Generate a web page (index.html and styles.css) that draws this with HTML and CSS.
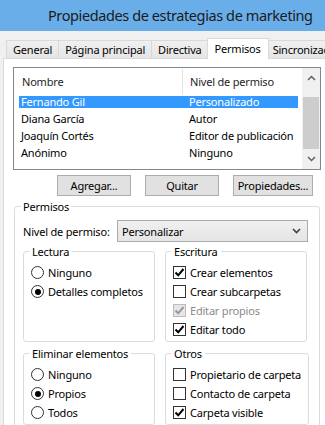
FILE: index.html
```html
<!DOCTYPE html>
<html lang="es">
<head>
  <meta charset="UTF-8" />
  <meta name="viewport" content="width=device-width, initial-scale=1" />
  <title>Propiedades de estrategias de marketing</title>
  <link rel="stylesheet" href="styles.css">
</head>
<body>
  <div class="window">
    <div class="titlebar">Propiedades de estrategias de marketing</div>

    <!-- Tab strip -->
    <div class="tabs">
      <div class="tab">General</div>
      <div class="tab">Página principal</div>
      <div class="tab">Directiva</div>
      <div class="tab active">Permisos</div>
      <div class="tab">Sincronización</div>
    </div>

    <div class="panel">
      <!-- Users list -->
      <div class="listbox">
        <div class="list-main">
          <div class="list-head">
            <div class="col-name">Nombre</div>
            <div class="col-level">Nivel de permiso</div>
          </div>
          <div class="row selected"><span class="col-name">Fernando Gil</span><span class="col-level">Personalizado</span></div>
          <div class="row"><span class="col-name">Diana García</span><span class="col-level">Autor</span></div>
          <div class="row"><span class="col-name">Joaquín Cortés</span><span class="col-level">Editor de publicación</span></div>
          <div class="row"><span class="col-name">Anónimo</span><span class="col-level">Ninguno</span></div>
        </div>
        <div class="scrollbar">
          <div class="scroll-btn">
            <svg width="9" height="6" viewBox="0 0 9 6"><path d="M1 5 L4.5 1.5 L8 5" fill="none" stroke="#606060" stroke-width="1.5"/></svg>
          </div>
          <div class="scroll-track"><div class="scroll-thumb"></div></div>
          <div class="scroll-btn">
            <svg width="9" height="6" viewBox="0 0 9 6"><path d="M1 1 L4.5 4.5 L8 1" fill="none" stroke="#606060" stroke-width="1.5"/></svg>
          </div>
        </div>
      </div>

      <div class="buttons">
        <button class="btn">Agregar...</button>
        <button class="btn">Quitar</button>
        <button class="btn wide">Propiedades...</button>
      </div>

      <!-- Permissions -->
      <fieldset class="group main-group">
        <legend>Permisos</legend>
        <div class="level-row">
          <span class="level-label">Nivel de permiso:</span>
          <div class="select">
            <span>Personalizar</span>
            <svg width="9" height="6" viewBox="0 0 9 6"><path d="M1 1 L4.5 4.5 L8 1" fill="none" stroke="#404040" stroke-width="1.6"/></svg>
          </div>
        </div>

        <div class="group-grid">
          <fieldset class="group sub">
            <legend>Lectura</legend>
            <div class="opt"><span class="radio"></span>Ninguno</div>
            <div class="opt"><span class="radio on"></span>Detalles completos</div>
          </fieldset>

          <fieldset class="group sub">
            <legend>Escritura</legend>
            <div class="opt"><span class="check on"><svg width="11" height="11" viewBox="0 0 11 11"><path d="M1.5 5.5 L4.2 8.3 L9.5 2" fill="none" stroke="#000" stroke-width="2"/></svg></span>Crear elementos</div>
            <div class="opt"><span class="check"></span>Crear subcarpetas</div>
            <div class="opt disabled"><span class="check on"><svg width="11" height="11" viewBox="0 0 11 11"><path d="M1.5 5.5 L4.2 8.3 L9.5 2" fill="none" stroke="#9a9a9a" stroke-width="2"/></svg></span>Editar propios</div>
            <div class="opt"><span class="check on"><svg width="11" height="11" viewBox="0 0 11 11"><path d="M1.5 5.5 L4.2 8.3 L9.5 2" fill="none" stroke="#000" stroke-width="2"/></svg></span>Editar todo</div>
          </fieldset>

          <fieldset class="group sub">
            <legend>Eliminar elementos</legend>
            <div class="opt"><span class="radio"></span>Ninguno</div>
            <div class="opt"><span class="radio on"></span>Propios</div>
            <div class="opt"><span class="radio"></span>Todos</div>
          </fieldset>

          <fieldset class="group sub">
            <legend>Otros</legend>
            <div class="opt"><span class="check"></span>Propietario de carpeta</div>
            <div class="opt"><span class="check"></span>Contacto de carpeta</div>
            <div class="opt"><span class="check on"><svg width="11" height="11" viewBox="0 0 11 11"><path d="M1.5 5.5 L4.2 8.3 L9.5 2" fill="none" stroke="#000" stroke-width="2"/></svg></span>Carpeta visible</div>
          </fieldset>
        </div>
      </fieldset>
    </div>
  </div>
</body>
</html>
```

FILE: styles.css
```css
* {
  box-sizing: border-box;
  margin: 0;
  padding: 0;
}
html, body {
  width: 100%;
  height: 100%;
  overflow: hidden;
}
body {
  background: #f0f0f0;
  font-family: "Noto Sans", "Open Sans", sans-serif;
  font-size: 11px;
  letter-spacing: -0.2px;
  color: #000;
}
.window {
  width: 335px;
}
.titlebar {
  height: 31px;
  line-height: 30px;
  padding-left: 48px;
  background: #6aaee9;
  color: #1b1b1b;
  font-size: 14.5px;
  letter-spacing: -0.4px;
  white-space: nowrap;
}

/* --- Tabs --- */
.tabs {
  display: flex;
  align-items: flex-end;
  height: 27px;
  padding-left: 7px;
  white-space: nowrap;
}
.tab {
  height: 18px;
  line-height: 18px;
  padding: 0 6px;
  margin-left: -1px;
  border: 1px solid #d9d9d9;
  border-bottom: none;
  background: linear-gradient(#f0f0f0, #e5e5e5);
}
.tab.active {
  height: 21px;
  line-height: 19px;
  padding: 0 7px;
  margin: 0 -2px -1px -2px;
  background: #fff;
  position: relative;
  z-index: 1;
}
.panel {
  margin-left: 3px;
  height: 400px;
  border: 1px solid #d9d9d9;
  background: #fff;
  padding: 8px 0 0 9px;
}

/* --- List box --- */
.listbox {
  display: flex;
  width: 308px;
  height: 103px;
  border: 1px solid #828790;
}
.list-main {
  flex: 1;
}
.list-head {
  display: flex;
  height: 28px;
  padding-top: 1px;
  padding-bottom: 1px;
  color: #1e1e1e;
}
.list-head .col-name {
  width: 169px;
  padding-left: 8px;
  border-right: 1px solid #e5e5e5;
  line-height: 26px;
}
.list-head .col-level {
  padding-left: 7px;
  line-height: 26px;
}
.row {
  display: flex;
  width: 279px;
  height: 12px;
  line-height: 12px;
  margin: 0 0 5px 5px;
  white-space: nowrap;
}
.row .col-name {
  width: 170px;
  padding-left: 2px;
}
.row.selected {
  background: #3399ff;
  color: #fff;
}
.scrollbar {
  width: 18px;
  display: flex;
  flex-direction: column;
  background: #f0f0f0;
}
.scroll-btn {
  height: 20px;
  display: flex;
  align-items: center;
  justify-content: center;
}
.scroll-track {
  flex: 1;
  display: flex;
  flex-direction: column;
  justify-content: flex-end;
  padding: 0 1px;
}
.scroll-thumb {
  height: 52px;
  background: #cdcdcd;
}

/* --- Buttons --- */
.buttons {
  display: flex;
  gap: 14px;
  margin: 5px 0 0 44px;
}
.btn {
  width: 74px;
  height: 21px;
  border: 1px solid #adadad;
  background: #e1e1e1;
  font: inherit;
  letter-spacing: inherit;
  color: #000;
}
.btn.wide {
  width: 80px;
}

/* --- Group boxes --- */
.group {
  border: 1px solid #dcdcdc;
  border-radius: 3px;
}
.group legend {
  line-height: 15px;
  padding: 0 2px;
  margin-left: -2px;
}
.main-group {
  width: 305px;
  height: 300px;
  margin-top: 3px;
  margin-left: 1px;
  padding: 0 11px 0 8px;
}
.level-row {
  display: flex;
  align-items: center;
  margin-top: 6px;
}
.level-label {
  width: 94px;
}
.select {
  width: 191px;
  height: 22px;
  display: flex;
  align-items: center;
  justify-content: space-between;
  padding: 0 6px 0 4px;
  border: 1px solid #acacac;
  background: linear-gradient(#f0f0f0, #e5e5e5);
}
.group-grid {
  display: grid;
  grid-template-columns: 132px 142px;
  column-gap: 10px;
  row-gap: 4px;
  margin-top: 2px;
}
.sub {
  padding: 0 7px 2px 7px;
}
.sub legend {
  padding: 0 3px;
}
.sub legend + .opt {
  margin-top: 4px;
}
.opt {
  display: flex;
  align-items: center;
  gap: 4px;
  height: 19px;
  white-space: nowrap;
}
.opt.disabled {
  color: #8a8a8a;
}
.radio {
  width: 13px;
  height: 13px;
  border: 1px solid #333;
  border-radius: 50%;
  background: #fff;
  display: flex;
  align-items: center;
  justify-content: center;
}
.radio.on::after {
  content: "";
  width: 6px;
  height: 6px;
  border-radius: 50%;
  background: #000;
}
.check {
  width: 13px;
  height: 13px;
  border: 1px solid #333;
  background: #fff;
  display: flex;
  align-items: center;
  justify-content: center;
}
.disabled .check {
  border-color: #bcbcbc;
  background: #e6e6e6;
}
```
